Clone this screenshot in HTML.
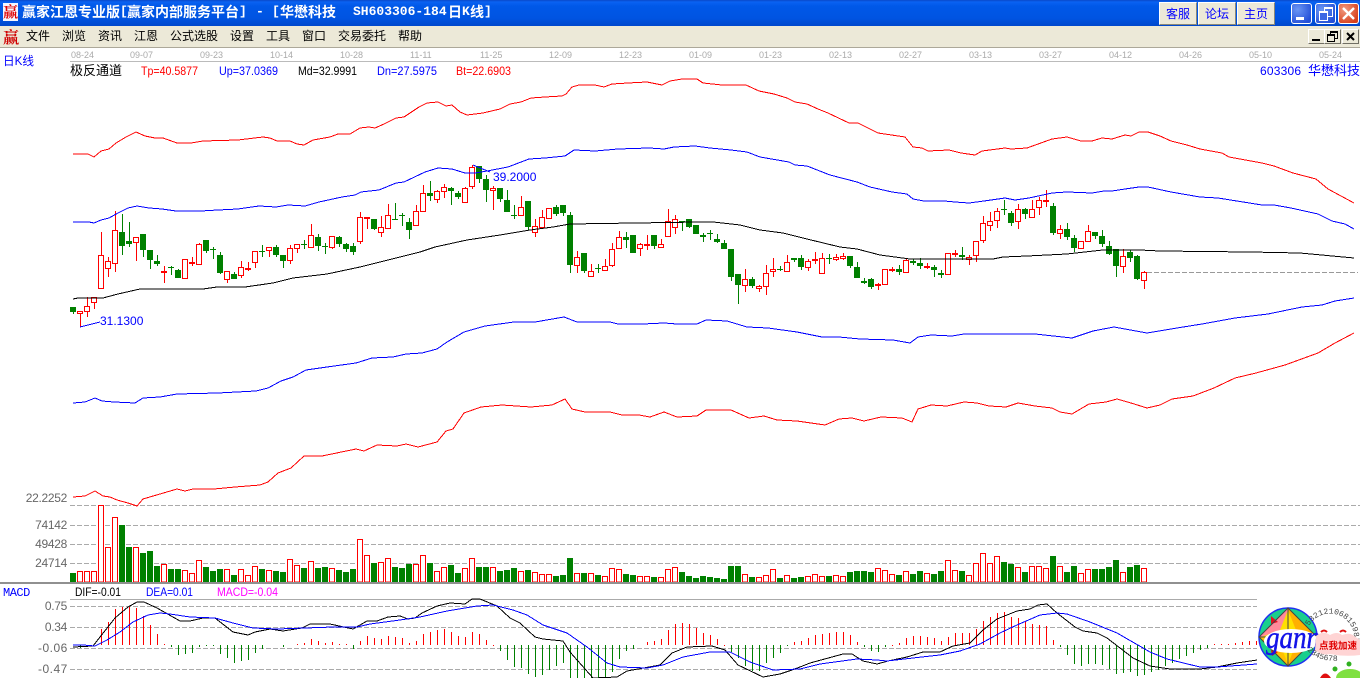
<!DOCTYPE html>
<html><head><meta charset="utf-8"><title>赢家江恩专业版</title>
<style>
html,body{margin:0;padding:0;background:#fff;width:1360px;height:678px;overflow:hidden}
body{position:relative;font-family:"Liberation Sans","WenQuanYi Zen Hei",sans-serif}
.a{position:absolute}
#tb{left:0;top:0;width:1360px;height:26px;background:linear-gradient(#0a48c8 0,#0a62f2 2px,#0058e8 6px,#0054e2 18px,#0048cc 26px)}
#mb{left:0;top:26px;width:1360px;height:21px;background:#ece9d8;border-bottom:1px solid #aca899}
.t{color:#fff;font:bold 14px/16px "WenQuanYi Zen Hei","Noto Sans CJK SC",sans-serif;top:4px;white-space:pre}
.l{font-family:"Liberation Mono","WenQuanYi Zen Hei",monospace;font-size:13px}
.m{top:29px;font:12px/14px "WenQuanYi Zen Hei","Noto Sans CJK SC",sans-serif;color:#000;white-space:pre}
.b{top:2px;width:36px;height:21px;background:#ece9d8;border-top:1px solid #fff;border-left:1px solid #fff;border-right:1px solid #8a8878;border-bottom:1px solid #8a8878;color:#00f;font:12px/21px "WenQuanYi Zen Hei","Noto Sans CJK SC",sans-serif;text-align:center}
.w{top:3px;width:19px;height:19px;border:1px solid #fff;border-radius:3px;background:radial-gradient(circle at 30% 30%,#6a96f4,#2450d8 80%)}
.c{top:29px;width:15px;height:13px;background:#ece9d8;border-top:1px solid #fff;border-left:1px solid #fff;border-right:1px solid #716f64;border-bottom:1px solid #716f64}
svg{position:absolute;left:0;top:0}
svg text{white-space:pre}
.s{font-family:"Liberation Sans","WenQuanYi Zen Hei",sans-serif;font-size:12px}
.d{font-family:"Liberation Sans",sans-serif;font-size:9px;fill:#aaa}
.y{font-family:"Liberation Sans",sans-serif;font-size:12px;fill:#666;text-anchor:end;letter-spacing:-.3px}
</style></head><body>
<div class="a" id="tb"></div>
<div class="a" id="mb"></div>
<div class="a" style="left:3px;top:3px;width:15px;height:18px;background:#f4f6ff;font:bold 15px/18px 'Noto Serif CJK SC',serif;color:#e00000;text-align:center;overflow:hidden">赢</div>
<div class="a t" style="left:22px">赢家江恩专业版</div>
<div class="a t l" style="left:120px">[</div>
<div class="a t" style="left:127px">赢家内部服务平台</div>
<div class="a t l" style="left:239px">]</div>
<div class="a t l" style="left:256px">-</div>
<div class="a t l" style="left:272px">[</div>
<div class="a t" style="left:280px">华懋科技</div>
<div class="a t l" style="left:353px">SH603306-184</div>
<div class="a t" style="left:448px">日</div>
<div class="a t l" style="left:462px">K</div>
<div class="a t" style="left:470px">线</div>
<div class="a t l" style="left:484px">]</div>

<div class="a b" style="left:1159px">客服</div>
<div class="a b" style="left:1198px">论坛</div>
<div class="a b" style="left:1237px">主页</div>
<div class="a w" style="left:1291px"><div class="a" style="left:4px;top:13px;width:8px;height:3px;background:#fff"></div></div>
<div class="a w" style="left:1315px"><div class="a" style="left:8px;top:3px;width:7px;height:7px;border:1px solid #fff;border-top-width:2px"></div><div class="a" style="left:3px;top:7px;width:7px;height:7px;border:1px solid #fff;border-top-width:2px;background:#3c68e4"></div></div>
<div class="a w" style="left:1338px;background:radial-gradient(circle at 30% 30%,#f09a80,#d8401c 80%)"><svg width="19" height="19"><path d="M4 4L15 15M15 4L4 15" stroke="#fff" stroke-width="2.4" fill="none"/></svg></div>

<div class="a" style="left:3px;top:28px;font:bold 16px/18px 'Noto Serif CJK SC',serif;color:#d00000">赢</div>
<div class="a m" style="left:26px">文件</div>
<div class="a m" style="left:62px">浏览</div>
<div class="a m" style="left:98px">资讯</div>
<div class="a m" style="left:134px">江恩</div>
<div class="a m" style="left:170px">公式选股</div>
<div class="a m" style="left:230px">设置</div>
<div class="a m" style="left:266px">工具</div>
<div class="a m" style="left:302px">窗口</div>
<div class="a m" style="left:338px">交易委托</div>
<div class="a m" style="left:398px">帮助</div>
<div class="a c" style="left:1308px"><div class="a" style="left:3px;top:9px;width:8px;height:2px;background:#000"></div></div>
<div class="a c" style="left:1324px"><div class="a" style="left:5px;top:1px;width:6px;height:5px;border:1px solid #000;border-top-width:2px"></div><div class="a" style="left:2px;top:4px;width:6px;height:5px;border:1px solid #000;border-top-width:2px;background:#ece9d8"></div></div>
<div class="a c" style="left:1342px"><svg width="15" height="13"><path d="M4 3L11 10M11 3L4 10" stroke="#000" stroke-width="2" fill="none"/></svg></div>

<svg width="1360" height="678" viewBox="0 0 1360 678">
<g shape-rendering="crispEdges">
<path d="M70 61.5H1360" stroke="#bbb" fill="none"/>
<path d="M70 505.5H1360M70 525.5H1360M70 544.5H1360M70 563.5H1360" stroke="#aaa" stroke-dasharray="5 2" fill="none"/>
<path d="M70 606.5H1257M70 627.5H1257M70 648.5H1257M70 669.5H1257" stroke="#aaa" stroke-dasharray="5 2" fill="none"/>
<path d="M70 599.5H1257" stroke="#aaa" fill="none"/>
<path d="M1147 272.5H1358" stroke="#999" stroke-dasharray="5 2" fill="none"/>

<!-- MACD bars -->
<path fill="none" stroke="#f00" d="M101.5 645V629M108.5 645V622M115.5 645V609M122.5 645V607M129.5 645V607M136.5 645V608M143.5 645V616M150.5 645V625M157.5 645V634M164.5 645V644M297.5 645V644M304.5 645V643M311.5 645V639M318.5 645V641M325.5 645V643M332.5 645V642M339.5 645V644M346.5 645V644M360.5 645V641M367.5 645V636M374.5 645V638M381.5 645V639M388.5 645V636M395.5 645V637M402.5 645V638M409.5 645V643M416.5 645V641M423.5 645V634M430.5 645V632M437.5 645V630M444.5 645V629M451.5 645V632M458.5 645V636M465.5 645V637M472.5 645V632M479.5 645V634M486.5 645V640M493.5 646V645M647.5 645V642M654.5 645V641M661.5 645V639M668.5 645V630M675.5 645V624M682.5 645V623M689.5 645V624M696.5 645V628M703.5 645V633M710.5 645V635M717.5 645V639M724.5 646V645M794.5 645V642M801.5 645V641M808.5 645V638M815.5 645V635M822.5 645V634M829.5 645V633M836.5 645V632M843.5 645V632M850.5 645V635M857.5 645V642M892.5 646V645M899.5 645V643M906.5 645V638M913.5 645V636M920.5 645V636M927.5 645V637M934.5 645V638M941.5 645V641M948.5 645V637M955.5 645V633M962.5 645V633M969.5 645V633M976.5 645V629M983.5 645V621M990.5 645V617M997.5 645V613M1004.5 645V612M1011.5 645V617M1018.5 645V618M1025.5 645V621M1032.5 645V624M1039.5 645V625M1046.5 645V626M1053.5 645V640M1214.5 645V644M1221.5 645V644M1228.5 645V644M1235.5 645V643M1242.5 645V642M1249.5 645V641M1256.5 645V641"/>
<path fill="none" stroke="#008000" d="M80.5 645V648M171.5 645V647M178.5 645V655M185.5 645V654M192.5 645V653M199.5 645V647M206.5 645V646M213.5 645V646M220.5 645V654M227.5 645V658M234.5 645V663M241.5 645V661M248.5 645V660M255.5 645V653M262.5 645V649M283.5 645V647M353.5 645V649M500.5 645V651M507.5 645V660M514.5 645V667M521.5 645V668M528.5 645V674M535.5 645V677M542.5 645V675M549.5 645V670M556.5 645V666M563.5 645V663M570.5 645V678M577.5 645V678M584.5 645V678M591.5 645V678M598.5 645V678M605.5 645V678M612.5 645V672M619.5 645V659M626.5 645V651M633.5 645V649M731.5 645V652M738.5 645V658M745.5 645V666M752.5 645V671M759.5 645V671M766.5 645V663M773.5 645V658M780.5 645V653M787.5 645V646M864.5 645V647M871.5 645V651M878.5 645V652M885.5 645V647M1060.5 645V647M1067.5 645V655M1074.5 645V664M1081.5 645V666M1088.5 645V664M1095.5 645V664M1102.5 645V665M1109.5 645V669M1116.5 645V674M1123.5 645V673M1130.5 645V672M1137.5 645V676M1144.5 645V675M1151.5 645V672M1158.5 645V670M1165.5 645V666M1172.5 645V663M1179.5 645V659M1186.5 645V656M1193.5 645V653M1200.5 645V650M1207.5 645V648"/>

<!-- Volume -->
<path fill="#fff" stroke="#f00" d="M77.5 571.5h5V582h-5zM84.5 571.5h5V582h-5zM91.5 571.5h5V582h-5zM98.5 505.5h5V582h-5zM105.5 547.5h5V582h-5zM112.5 517.5h5V582h-5zM133.5 547.5h5V582h-5zM161.5 564.5h5V582h-5zM182.5 570.5h5V582h-5zM189.5 573.5h5V582h-5zM196.5 560.5h5V582h-5zM224.5 569.5h5V582h-5zM238.5 569.5h5V582h-5zM245.5 575.5h5V582h-5zM252.5 566.5h5V582h-5zM266.5 570.5h5V582h-5zM287.5 559.5h5V582h-5zM294.5 565.5h5V582h-5zM308.5 561.5h5V582h-5zM329.5 568.5h5V582h-5zM357.5 539.5h5V582h-5zM364.5 555.5h5V582h-5zM378.5 562.5h5V582h-5zM385.5 558.5h5V582h-5zM413.5 564.5h5V582h-5zM420.5 555.5h5V582h-5zM434.5 571.5h5V582h-5zM441.5 567.5h5V582h-5zM462.5 568.5h5V582h-5zM469.5 558.5h5V582h-5zM490.5 567.5h5V582h-5zM518.5 571.5h5V582h-5zM532.5 572.5h5V582h-5zM539.5 574.5h5V582h-5zM546.5 574.5h5V582h-5zM574.5 573.5h5V582h-5zM588.5 573.5h5V582h-5zM602.5 576.5h5V582h-5zM609.5 568.5h5V582h-5zM616.5 569.5h5V582h-5zM637.5 576.5h5V582h-5zM644.5 576.5h5V582h-5zM658.5 577.5h5V582h-5zM665.5 569.5h5V582h-5zM672.5 567.5h5V582h-5zM742.5 574.5h5V582h-5zM756.5 577.5h5V582h-5zM763.5 575.5h5V582h-5zM770.5 569.5h5V582h-5zM784.5 575.5h5V582h-5zM805.5 576.5h5V582h-5zM812.5 574.5h5V582h-5zM819.5 576.5h5V582h-5zM833.5 575.5h5V582h-5zM840.5 576.5h5V582h-5zM875.5 568.5h5V582h-5zM882.5 570.5h5V582h-5zM889.5 574.5h5V582h-5zM903.5 571.5h5V582h-5zM924.5 573.5h5V582h-5zM945.5 560.5h5V582h-5zM952.5 570.5h5V582h-5zM966.5 575.5h5V582h-5zM973.5 563.5h5V582h-5zM980.5 553.5h5V582h-5zM987.5 563.5h5V582h-5zM994.5 556.5h5V582h-5zM1015.5 567.5h5V582h-5zM1029.5 566.5h5V582h-5zM1036.5 566.5h5V582h-5zM1043.5 568.5h5V582h-5zM1057.5 566.5h5V582h-5zM1078.5 573.5h5V582h-5zM1085.5 569.5h5V582h-5zM1120.5 572.5h5V582h-5zM1141.5 568.5h5V582h-5z"/>
<path fill="#008000" d="M70 573h6V582h-6zM119 525h6V582h-6zM126 547h6V582h-6zM140 553h6V582h-6zM147 551h6V582h-6zM154 566h6V582h-6zM168 569h6V582h-6zM175 569h6V582h-6zM203 567h6V582h-6zM210 571h6V582h-6zM217 569h6V582h-6zM231 575h6V582h-6zM259 569h6V582h-6zM273 571h6V582h-6zM280 572h6V582h-6zM301 568h6V582h-6zM315 568h6V582h-6zM322 567h6V582h-6zM336 570h6V582h-6zM343 572h6V582h-6zM350 569h6V582h-6zM371 563h6V582h-6zM392 567h6V582h-6zM399 568h6V582h-6zM406 564h6V582h-6zM427 563h6V582h-6zM448 565h6V582h-6zM455 573h6V582h-6zM476 567h6V582h-6zM483 567h6V582h-6zM497 571h6V582h-6zM504 570h6V582h-6zM511 568h6V582h-6zM525 570h6V582h-6zM553 576h6V582h-6zM560 575h6V582h-6zM567 558h6V582h-6zM581 573h6V582h-6zM595 575h6V582h-6zM623 574h6V582h-6zM630 575h6V582h-6zM651 577h6V582h-6zM679 572h6V582h-6zM686 576h6V582h-6zM693 578h6V582h-6zM700 576h6V582h-6zM707 577h6V582h-6zM714 578h6V582h-6zM721 579h6V582h-6zM728 566h6V582h-6zM735 566h6V582h-6zM749 577h6V582h-6zM777 578h6V582h-6zM791 578h6V582h-6zM798 577h6V582h-6zM826 576h6V582h-6zM847 572h6V582h-6zM854 571h6V582h-6zM861 571h6V582h-6zM868 572h6V582h-6zM896 575h6V582h-6zM910 574h6V582h-6zM917 571h6V582h-6zM931 574h6V582h-6zM938 571h6V582h-6zM959 571h6V582h-6zM1001 562h6V582h-6zM1008 564h6V582h-6zM1022 572h6V582h-6zM1050 556h6V582h-6zM1064 572h6V582h-6zM1071 566h6V582h-6zM1092 569h6V582h-6zM1099 569h6V582h-6zM1106 567h6V582h-6zM1113 560h6V582h-6zM1127 567h6V582h-6zM1134 565h6V582h-6z"/>
<path d="M0 583H1360" stroke="#909090" stroke-width="2" fill="none"/>

<!-- Candles: wicks -->
<path fill="none" stroke="#f00" d="M80.5 311V327M87.5 297V317M94.5 297V309M101.5 232V288M108.5 257V277M115.5 211V272M136.5 237V261M164.5 266V283M185.5 259V278M192.5 257V266M199.5 243V264M227.5 271V283M241.5 261V278M248.5 262V271M255.5 251V268M269.5 247V257M290.5 245V264M297.5 244V253M311.5 224V247M332.5 236V249M360.5 212V244M367.5 217V229M381.5 216V237M388.5 204V228M416.5 205V226M423.5 185V212M437.5 190V203M444.5 184V198M465.5 187V202M472.5 165V189M493.5 186V210M521.5 196V215M535.5 219V237M542.5 210V227M549.5 208V218M577.5 251V273M591.5 264V276M605.5 259V270M612.5 243V267M619.5 231V248M640.5 243V256M647.5 235V250M661.5 239V247M668.5 209V237M675.5 215V234M745.5 269V292M759.5 285V292M766.5 265V295M773.5 258V277M787.5 255V271M808.5 259V271M815.5 252V264M822.5 253V273M836.5 254V261M843.5 253V260M878.5 283V290M885.5 269V285M892.5 267V272M906.5 259V272M927.5 263V269M948.5 253V275M955.5 250V257M969.5 255V265M976.5 241V262M983.5 216V243M990.5 212V231M997.5 208V228M1018.5 204V229M1032.5 200V217M1039.5 197V215M1046.5 190V207M1060.5 225V239M1081.5 241V248M1088.5 225V242M1123.5 249V273M1144.5 271V289"/>
<path fill="none" stroke="#008000" d="M73.5 307V314M122.5 214V255M129.5 222V247M143.5 234V257M150.5 250V269M157.5 255V266M171.5 266V275M178.5 269V278M206.5 240V253M213.5 247V259M220.5 252V274M234.5 272V279M262.5 245V257M276.5 245V257M283.5 255V268M304.5 240V249M318.5 234V251M325.5 243V254M339.5 236V247M346.5 243V252M353.5 243V255M374.5 219V230M395.5 203V220M402.5 213V226M409.5 218V239M430.5 181V201M451.5 187V205M458.5 191V199M479.5 166V183M486.5 175V202M500.5 188V202M507.5 190V212M514.5 205V219M528.5 201V230M556.5 205V216M563.5 205V216M570.5 212V273M584.5 253V273M598.5 264V273M626.5 232V248M633.5 235V253M654.5 235V249M682.5 221V231M689.5 219V228M696.5 225V234M703.5 233V242M710.5 230V240M717.5 234V243M724.5 240V249M731.5 249V281M738.5 274V304M752.5 277V288M780.5 266V271M794.5 258V262M801.5 255V270M829.5 254V264M850.5 256V268M857.5 262V278M864.5 278V284M871.5 278V289M899.5 265V275M913.5 259V265M920.5 258V269M934.5 265V277M941.5 270V278M962.5 247V260M1004.5 200V215M1011.5 211V226M1025.5 208V219M1053.5 203V235M1067.5 223V240M1074.5 235V252M1095.5 232V239M1102.5 230V247M1109.5 241V255M1116.5 249V277M1130.5 250V262M1137.5 255V280"/>
<!-- Candles: bodies -->
<path fill="#fff" stroke="#f00" d="M77.5 311.5h5v2h-5zM84.5 306.5h5v5h-5zM91.5 297.5h5v5h-5zM98.5 255.5h5v33h-5zM105.5 261.5h5v7h-5zM112.5 230.5h5v33h-5zM133.5 237.5h5v5h-5zM161.5 271.5h5v1h-5zM182.5 259.5h5v19h-5zM189.5 262.5h5v1h-5zM196.5 244.5h5v20h-5zM224.5 271.5h5v8h-5zM238.5 267.5h5v8h-5zM245.5 268.5h5v1h-5zM252.5 251.5h5v11h-5zM266.5 247.5h5v3h-5zM287.5 248.5h5v12h-5zM294.5 244.5h5v4h-5zM308.5 235.5h5v12h-5zM329.5 236.5h5v11h-5zM357.5 217.5h5v24h-5zM364.5 217.5h5v1h-5zM378.5 227.5h5v5h-5zM385.5 215.5h5v13h-5zM413.5 211.5h5v14h-5zM420.5 193.5h5v18h-5zM434.5 191.5h5v8h-5zM441.5 187.5h5v4h-5zM462.5 188.5h5v14h-5zM469.5 167.5h5v19h-5zM490.5 188.5h5v2h-5zM518.5 207.5h5v8h-5zM532.5 226.5h5v6h-5zM539.5 217.5h5v10h-5zM546.5 208.5h5v10h-5zM574.5 257.5h5v8h-5zM588.5 271.5h5v5h-5zM602.5 266.5h5v4h-5zM609.5 249.5h5v16h-5zM616.5 237.5h5v11h-5zM637.5 244.5h5v4h-5zM644.5 244.5h5v1h-5zM658.5 244.5h5v3h-5zM665.5 221.5h5v15h-5zM672.5 219.5h5v8h-5zM742.5 279.5h5v6h-5zM756.5 286.5h5v2h-5zM763.5 273.5h5v13h-5zM770.5 269.5h5v2h-5zM784.5 262.5h5v9h-5zM805.5 261.5h5v6h-5zM812.5 259.5h5v1h-5zM819.5 258.5h5v15h-5zM833.5 257.5h5v2h-5zM840.5 256.5h5v2h-5zM875.5 284.5h5v1h-5zM882.5 269.5h5v15h-5zM889.5 269.5h5v1h-5zM903.5 260.5h5v12h-5zM924.5 266.5h5v1h-5zM945.5 253.5h5v21h-5zM952.5 253.5h5v1h-5zM966.5 257.5h5v2h-5zM973.5 241.5h5v14h-5zM980.5 223.5h5v17h-5zM987.5 221.5h5v4h-5zM994.5 211.5h5v9h-5zM1015.5 209.5h5v12h-5zM1029.5 209.5h5v8h-5zM1036.5 200.5h5v7h-5zM1043.5 200.5h5v1h-5zM1057.5 229.5h5v4h-5zM1078.5 241.5h5v7h-5zM1085.5 231.5h5v10h-5zM1120.5 256.5h5v10h-5zM1141.5 272.5h5v8h-5z"/>
<path fill="#008000" d="M70 307h6v5h-6zM119 232h6v14h-6zM126 241h6v3h-6zM140 234h6v16h-6zM147 250h6v10h-6zM154 261h6v3h-6zM168 267h6v1h-6zM175 270h6v8h-6zM203 240h6v11h-6zM210 249h6v1h-6zM217 255h6v18h-6zM231 274h6v5h-6zM259 251h6v1h-6zM273 247h6v8h-6zM280 255h6v6h-6zM301 244h6v1h-6zM315 237h6v9h-6zM322 246h6v1h-6zM336 237h6v7h-6zM343 244h6v5h-6zM350 246h6v6h-6zM371 219h6v10h-6zM392 219h6v1h-6zM399 215h6v1h-6zM406 222h6v8h-6zM427 193h6v3h-6zM448 188h6v3h-6zM455 193h6v4h-6zM476 166h6v13h-6zM483 179h6v11h-6zM497 188h6v11h-6zM504 200h6v12h-6zM511 215h6v1h-6zM525 201h6v26h-6zM553 207h6v7h-6zM560 205h6v8h-6zM567 215h6v50h-6zM581 253h6v18h-6zM595 268h6v1h-6zM623 237h6v3h-6zM630 235h6v18h-6zM651 235h6v11h-6zM679 221h6v1h-6zM686 219h6v8h-6zM693 225h6v9h-6zM700 235h6v2h-6zM707 233h6v1h-6zM714 239h6v3h-6zM721 243h6v6h-6zM728 249h6v28h-6zM735 274h6v11h-6zM749 279h6v7h-6zM777 269h6v1h-6zM791 258h6v2h-6zM798 258h6v9h-6zM826 258h6v1h-6zM847 256h6v10h-6zM854 267h6v11h-6zM861 281h6v2h-6zM868 279h6v8h-6zM896 269h6v3h-6zM910 261h6v2h-6zM917 263h6v3h-6zM931 267h6v3h-6zM938 273h6v2h-6zM959 255h6v2h-6zM1001 209h6v1h-6zM1008 213h6v10h-6zM1022 209h6v5h-6zM1050 206h6v27h-6zM1064 229h6v8h-6zM1071 238h6v10h-6zM1092 232h6v4h-6zM1099 236h6v8h-6zM1106 246h6v8h-6zM1113 249h6v17h-6zM1127 252h6v6h-6zM1134 256h6v23h-6z"/>

<!-- Bands -->
<g fill="none">
<polyline stroke="#f00" points="73,154 88,154 94,157 101,151 109,149 116,143 126,137 136,132 145,136 155,138 163,138 177,143 191,143 203,141 238,140 263,137 270,138 277,141 290,141 297,144 304,145 313,140 330,137 338,134 350,134 360,128 369,127 375,128 384,124 396,118 404,117 419,107 427,103 438,102 446,106 452,105 460,112 467,115 483,113 500,109 510,104 521,102 531,98 545,97 562,96 566,94 572,87 579,85 595,85 604,87 612,84 628,83 647,82 662,85 670,81 682,79 697,79 703,83 722,85 746,85 759,91 774,94 787,98 795,102 807,104 818,109 828,113 849,123 858,123 878,133 905,137 913,147 922,148 928,151 949,150 961,153 975,155 982,151 1005,148 1011,149 1027,148 1052,139 1067,137 1081,141 1092,141 1102,138 1112,139 1125,135 1131,136 1139,132 1148,132 1160,136 1171,141 1187,145 1200,149 1222,153 1229,157 1262,163 1274,166 1293,173 1316,179 1328,189 1354,203"/>
<polyline stroke="#00f" points="73,222 89,222 94,223 101,220 109,218 118,213 128,208 137,206 149,208 162,209 176,211 201,211 218,210 238,209 259,206 276,207 288,205 305,206 319,202 342,197 355,195 361,192 379,190 396,183 404,182 425,172 438,168 452,169 465,173 475,173 487,171 508,167 529,159 545,158 565,156 574,150 595,151 618,149 649,148 664,149 674,147 695,146 710,148 731,150 747,152 760,157 789,162 795,165 807,166 830,175 857,182 870,187 892,192 907,194 913,199 924,201 944,201 955,202 969,203 984,201 1005,198 1015,200 1029,198 1052,193 1067,192 1092,193 1104,191 1112,191 1125,189 1139,187 1148,187 1171,192 1200,197 1218,198 1262,205 1274,205 1291,208 1318,214 1332,221 1345,224 1354,229"/>
<polyline stroke="#000" points="73,299 78,298 103,298 118,294 140,289 203,289 217,287 245,287 273,283 293,278 327,274 360,267 380,262 400,257 420,252 435,247 467,240 500,235 530,230 553,227 570,224 700,222 713,222 740,225 760,230 783,233 807,239 840,247 857,249 880,255 910,259 993,259 1003,257 1027,256 1067,254 1103,250 1140,250 1160,251 1250,252 1300,253 1354,258"/>
<polyline stroke="#00f" points="73,403 85,402 95,398 102,401 114,402 135,403 143,398 160,397 177,394 218,393 256,391 268,388 281,381 293,377 306,370 327,367 356,363 372,358 393,357 406,354 422,353 437,349 447,342 464,332 485,326 514,322 535,322 564,317 577,322 610,322 618,324 643,324 664,323 677,324 697,324 706,320 727,321 747,327 768,328 797,332 822,337 839,337 860,339 893,340 910,343 918,337 931,335 952,336 964,334 985,334 1035,334 1072,338 1093,331 1114,327 1147,333 1177,328 1202,324 1235,318 1268,314 1302,307 1322,305 1335,301 1354,298"/>
<polyline stroke="#f00" points="73,497 85,496 95,491 103,496 110,497 117,500 128,503 137,506 143,499 160,494 177,489 185,491 193,489 214,489 235,487 260,485 268,482 278,473 291,468 304,456 322,456 356,449 364,451 377,445 397,446 406,444 418,447 437,442 446,431 453,429 464,413 481,407 502,405 531,407 552,405 565,399 572,409 585,412 610,412 622,415 639,415 650,417 664,412 677,417 697,416 706,410 731,410 749,418 764,416 777,420 797,421 825,425 839,419 852,418 864,421 881,417 902,418 912,422 918,409 931,405 947,406 964,402 977,403 989,406 1006,407 1018,403 1035,406 1052,408 1060,412 1072,414 1089,404 1106,402 1117,399 1131,403 1147,408 1160,405 1172,399 1193,396 1214,388 1235,378 1256,373 1285,365 1318,353 1335,343 1354,333"/>
<polyline stroke="#000" points="73,647 93,646 100,637 115,618 128,607 137,602 144,602 157,608 180,621 190,621 203,618 215,618 233,632 248,635 255,632 270,629 283,631 302,628 310,624 330,624 353,629 367,621 377,621 388,617 400,616 408,619 415,618 422,613 437,606 450,603 465,604 472,599 480,599 497,606 510,618 520,623 535,637 543,639 563,641 570,652 593,678 617,677 627,671 660,665 672,653 687,647 712,646 725,650 738,665 763,677 780,674 792,670 800,667 810,663 843,654 852,654 863,661 877,664 888,661 907,657 923,652 940,652 953,646 970,643 983,630 997,619 1017,611 1030,609 1038,605 1047,604 1057,613 1075,627 1083,631 1097,633 1107,638 1133,658 1150,666 1170,669 1190,669 1200,669 1217,667 1237,663 1257,660"/>
<polyline stroke="#00f" points="73,645 83,645 95,646 107,640 120,632 133,622 148,615 160,613 170,614 190,617 215,618 233,623 253,628 277,629 333,627 357,627 370,624 400,620 420,617 447,611 477,606 493,605 513,610 527,615 543,625 567,633 587,647 607,663 620,667 647,668 663,665 683,657 710,652 730,652 750,662 773,670 800,669 820,664 857,659 877,660 887,661 913,658 940,655 960,651 980,644 1000,633 1017,625 1040,615 1057,613 1067,614 1090,622 1117,633 1150,652 1167,659 1200,667 1217,667 1257,664"/>
<polyline stroke="#00f" points="80,327 100,322"/>
<polyline stroke="#00f" points="473,165 490,172"/>
</g>
</g>

<text class="s" x="3" y="65" fill="#00f" textLength="31" lengthAdjust="spacingAndGlyphs">日K线</text>
<text x="70" y="75" style="font:13px 'WenQuanYi Zen Hei','Noto Sans CJK SC',sans-serif" fill="#000">极反通道</text>
<text class="s" x="141" y="75" fill="#f00" textLength="57" lengthAdjust="spacingAndGlyphs">Tp=40.5877</text>
<text class="s" x="219" y="75" fill="#00f" textLength="59" lengthAdjust="spacingAndGlyphs">Up=37.0369</text>
<text class="s" x="298" y="75" fill="#000" textLength="59" lengthAdjust="spacingAndGlyphs">Md=32.9991</text>
<text class="s" x="377" y="75" fill="#00f" textLength="60" lengthAdjust="spacingAndGlyphs">Dn=27.5975</text>
<text class="s" x="456" y="75" fill="#f00" textLength="55" lengthAdjust="spacingAndGlyphs">Bt=22.6903</text>
<text class="s" x="1260" y="75" fill="#00f" textLength="41" lengthAdjust="spacing">603306</text>
<text x="1308" y="75" style="font:13px 'WenQuanYi Zen Hei','Noto Sans CJK SC',sans-serif" fill="#00f">华懋科技</text>

<text class="d" x="71" y="58">08-24</text><text class="d" x="130" y="58">09-07</text><text class="d" x="200" y="58">09-23</text><text class="d" x="270" y="58">10-14</text><text class="d" x="340" y="58">10-28</text><text class="d" x="410" y="58">11-11</text><text class="d" x="480" y="58">11-25</text><text class="d" x="549" y="58">12-09</text><text class="d" x="619" y="58">12-23</text><text class="d" x="689" y="58">01-09</text><text class="d" x="759" y="58">01-23</text><text class="d" x="829" y="58">02-13</text><text class="d" x="899" y="58">02-27</text><text class="d" x="969" y="58">03-13</text><text class="d" x="1039" y="58">03-27</text><text class="d" x="1109" y="58">04-12</text><text class="d" x="1179" y="58">04-26</text><text class="d" x="1249" y="58">05-10</text><text class="d" x="1319" y="58">05-24</text>

<text class="s" x="493" y="181" fill="#00f">39.2000</text>
<text class="s" x="100" y="325" fill="#00f">31.1300</text>

<text class="y" x="67" y="502">22.2252</text>
<text class="y" x="67" y="529">74142</text>
<text class="y" x="67" y="548">49428</text>
<text class="y" x="67" y="567">24714</text>
<text class="y" x="67" y="610">0.75</text>
<text class="y" x="67" y="631">0.34</text>
<text class="y" x="67" y="652" textLength="29" lengthAdjust="spacing">-0.06</text>
<text class="y" x="67" y="673" textLength="29" lengthAdjust="spacing">-0.47</text>

<text x="3" y="596" style="font:12px 'Liberation Mono',monospace;letter-spacing:-.5px" fill="#00f">MACD</text>
<text class="s" x="75" y="596" fill="#000" textLength="46" lengthAdjust="spacingAndGlyphs">DIF=-0.01</text>
<text class="s" x="146" y="596" fill="#00f" textLength="47" lengthAdjust="spacingAndGlyphs">DEA=0.01</text>
<text class="s" x="217" y="596" fill="#f0f" textLength="61" lengthAdjust="spacingAndGlyphs">MACD=-0.04</text>

<!-- Gann logo -->
<defs>
<path id="ra" d="M1309 626A24 24 0 0 1 1352.5 646"/>
<path id="rb" d="M1307 650Q1320 664 1345 660"/>
</defs>
<circle cx="1288" cy="637" r="29" fill="#19cf8c" stroke="#2030f0" stroke-width="1.5"/>
<path d="M1288 608L1259 637H1288Z" fill="#ff8a9a"/>
<path d="M1288 608L1317 637H1288Z" fill="#ffb000"/>
<path d="M1288 666L1259 637H1288Z" fill="#ffc000"/>
<path d="M1288 666L1317 637H1288Z" fill="#ffb000"/>
<path d="M1288 610L1296 630L1288 637L1280 630ZM1288 664L1296 644L1288 637L1280 644ZM1261 637L1280 630V644Z" fill="#ffe000"/>
<path d="M1271 616L1278 622L1271 624ZM1272 656L1278 652L1271 650Z" fill="#e01020"/>
<path d="M1288 608L1259 637L1288 666L1317 637ZM1288 608V666M1259 637H1317" fill="none" stroke="#444" stroke-width="1"/>
<ellipse cx="1291" cy="641" rx="27" ry="12" fill="#fff"/>
<text font-family="Liberation Serif,serif" font-style="italic" font-size="32" fill="#1414e8" stroke="#1414e8" stroke-width=".5" x="1266" y="648" textLength="54" lengthAdjust="spacingAndGlyphs">gann</text>
<g font-family="Liberation Mono,monospace" font-size="8" fill="#444">
<text><textPath href="#ra">53212106815987</textPath></text>
<text><textPath href="#rb">2345678</textPath></text>
</g>
<path d="M1316 636Q1323 630 1330 635Q1337 631 1342 635Q1350 632 1354 636L1360 640V655Q1345 657 1330 654Q1322 656 1315 650Z" fill="#ffd4d4"/>
<path d="M1321 632q3-3 6 0M1340 632q3-3 6 0" stroke="#e01010" stroke-width="2" fill="none"/>
<text x="1319" y="649" style="font:bold 9.5px 'Noto Sans CJK SC',sans-serif" fill="#e00000">点我加速</text>
<ellipse cx="1350" cy="678" rx="14" ry="9" fill="#7fe040"/>
<circle cx="1335" cy="669" r="2.5" fill="#30b020"/><circle cx="1349" cy="664" r="2.5" fill="#30b020"/>
<path d="M1320 678q5-9 11 0z" fill="#e01010"/>
</svg>
</body></html>
